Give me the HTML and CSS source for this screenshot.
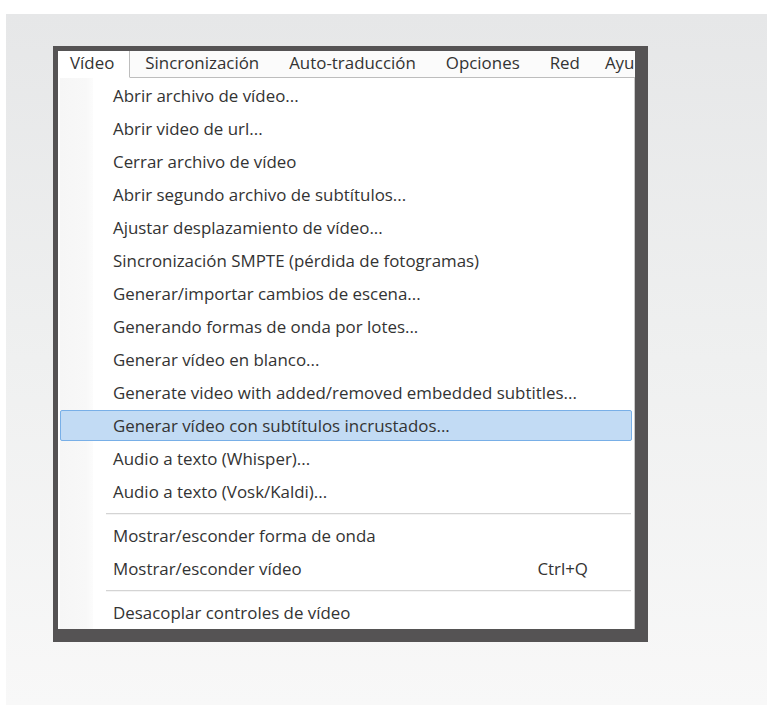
FILE: index.html
```html
<!DOCTYPE html>
<html lang="es">
<head>
<meta charset="utf-8">
<title>Menú Vídeo</title>
<link rel="stylesheet" href="styles.css">
</head>
<body>
<div class="panel">
  <div class="window">
    <nav class="menubar">
      <span class="mb-item open">Vídeo</span>
      <span class="mb-item">Sincronización</span>
      <span class="mb-item">Auto-traducción</span>
      <span class="mb-item">Opciones</span>
      <span class="mb-item">Red</span>
      <span class="mb-item">Ayuda</span>
    </nav>
    <div class="dropdown">
      <ul class="menu">
        <li class="item">Abrir archivo de vídeo...</li>
        <li class="item">Abrir video de url...</li>
        <li class="item">Cerrar archivo de vídeo</li>
        <li class="item">Abrir segundo archivo de subtítulos...</li>
        <li class="item">Ajustar desplazamiento de vídeo...</li>
        <li class="item">Sincronización SMPTE (pérdida de fotogramas)</li>
        <li class="item">Generar/importar cambios de escena...</li>
        <li class="item">Generando formas de onda por lotes...</li>
        <li class="item">Generar vídeo en blanco...</li>
        <li class="item">Generate video with added/removed embedded subtitles...</li>
        <li class="item active">Generar vídeo con subtítulos incrustados...</li>
        <li class="item">Audio a texto (Whisper)...</li>
        <li class="item">Audio a texto (Vosk/Kaldi)...</li>
        <li class="sep"></li>
        <li class="item">Mostrar/esconder forma de onda</li>
        <li class="item"><span>Mostrar/esconder vídeo</span><span class="shortcut">Ctrl+Q</span></li>
        <li class="sep"></li>
        <li class="item">Desacoplar controles de vídeo</li>
      </ul>
    </div>
  </div>
</div>
</body>
</html>
```

FILE: styles.css
```css
html, body {
  margin: 0;
  padding: 0;
  background: #ffffff;
}

body {
  font-family: "Open Sans", "Noto Sans", sans-serif;
  font-size: 16.9px;
  color: #333333;
  overflow: hidden;
}

/* grey backdrop behind the window */
.panel {
  margin: 14px 0 0 6px;
  height: 691px;
  padding: 32px 0 0 47px;
  box-sizing: border-box;
  background: linear-gradient(to bottom, #e6e7e8 0%, #eff0f0 50%, #f8f8f8 100%);
}

/* dark window frame */
.window {
  width: 577px;
  border-style: solid;
  border-color: #555354;
  border-width: 5px 13px 13px 5px;
  background: #ffffff;
}

/* menu bar: the last title runs past the window edge and is clipped */
.menubar {
  display: flex;
  height: 27px;
  background: #fbfbfb;
  overflow: hidden;
  white-space: nowrap;
}

.mb-item {
  flex: none;
  box-sizing: border-box;
  height: 27px;
  line-height: 24px;
  padding: 0 15px;
  border-bottom: 1px solid #bdbdbd;
}

.mb-item:last-child {
  flex: 1 0 auto;
  padding: 0 0 0 10px;
}

.mb-item.open {
  padding: 0 15px 0 12px;
  background: #ffffff;
  border-bottom-color: transparent;
  border-right: 1px solid #bdbdbd;
}

/* drop-down menu */
.dropdown {
  position: relative;
  border-right: 1px solid #c9c9c9;
  background: #ffffff;
}

.dropdown::before {
  content: "";
  position: absolute;
  left: 2px;
  top: 0;
  bottom: 0;
  width: 33px;
  background: linear-gradient(to right, #f6f6f6, #f8f8f8 80%, #fcfcfc);
}

.menu {
  position: relative;
  display: flex;
  flex-direction: column;
  list-style: none;
  margin: 0;
  padding: 1px 0 0;
}

.item {
  display: flex;
  justify-content: space-between;
  box-sizing: border-box;
  height: 31px;
  line-height: 29px;
  margin: 1px 2px;
  padding: 0 43px 0 52px;
  border: 1px solid transparent;
  border-radius: 2px;
  white-space: nowrap;
}

.item.active {
  background: #c2dbf4;
  border-color: #78afe7;
}

.sep {
  height: 11px;
  display: flex;
  align-items: center;
  padding: 0 3px 0 48px;
}

.sep::after {
  content: "";
  flex: 1;
  height: 1px;
  background: #d4d4d4;
  border-bottom: 1px solid #f4f4f4;
}
```
